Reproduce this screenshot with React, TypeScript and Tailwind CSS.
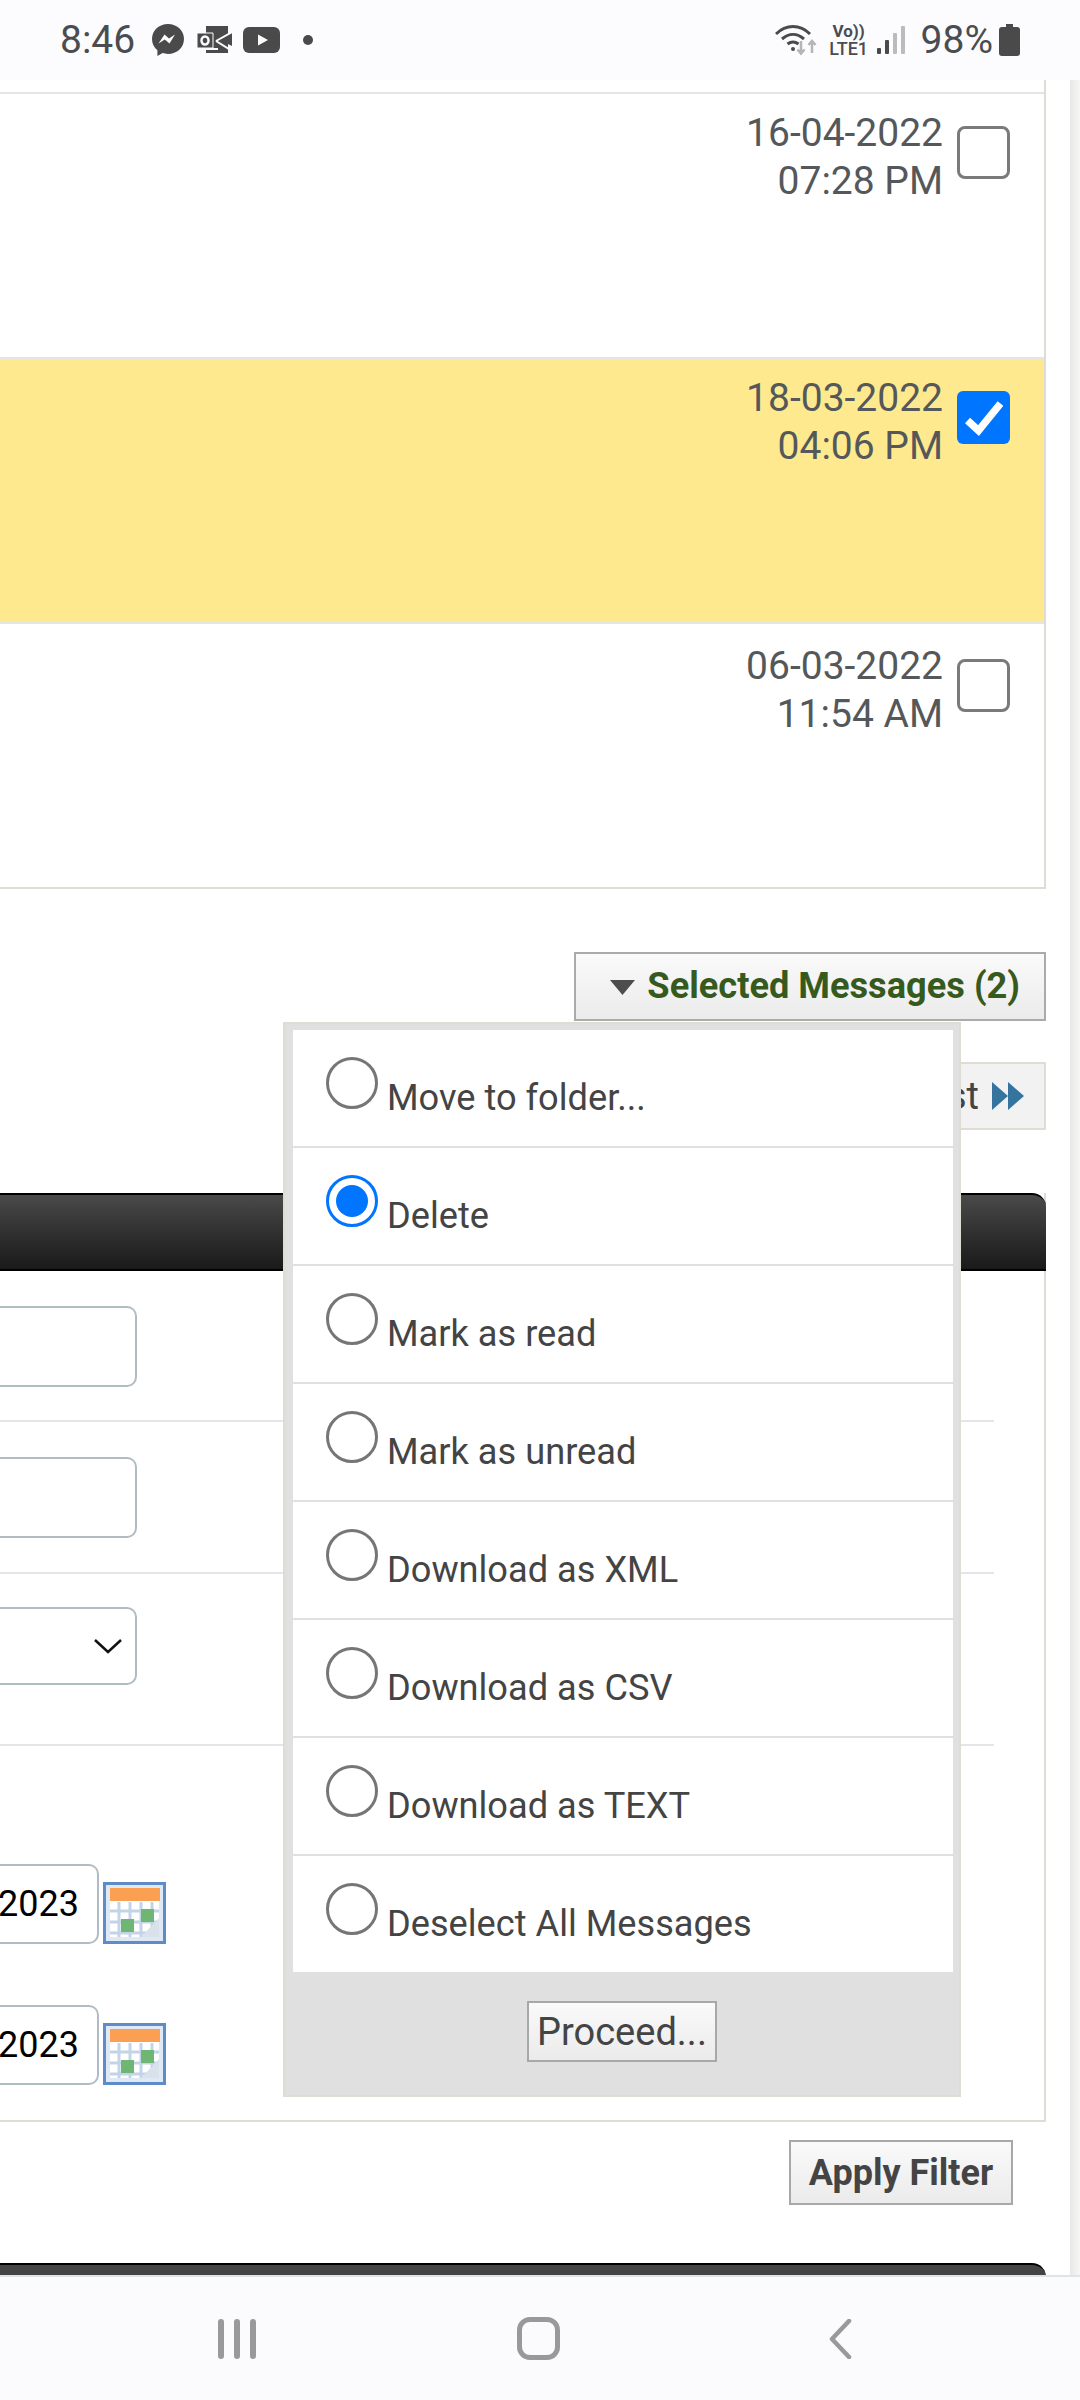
import * as React from "react";

const MENU_ITEMS = [
  { label: "Move to folder...", checked: false },
  { label: "Delete", checked: true },
  { label: "Mark as read", checked: false },
  { label: "Mark as unread", checked: false },
  { label: "Download as XML", checked: false },
  { label: "Download as CSV", checked: false },
  { label: "Download as TEXT", checked: false },
  { label: "Deselect All Messages", checked: false },
];

const MESSAGES = [
  { date: "16-04-2022", time: "07:28 PM", selected: false, pad: "pt-[15px]" },
  { date: "18-03-2022", time: "04:06 PM", selected: true, pad: "pt-[15px]" },
  { date: "06-03-2022", time: "11:54 AM", selected: false, pad: "pt-[18px]" },
];

function StatusBar() {
  return (
    <div className="flex h-[80px] shrink-0 items-center bg-[#fcfcfe] text-[#4a4d50]">
      <span className="ml-[60px] text-[39px] leading-none">8:46</span>
      {/* messenger */}
      <svg className="ml-[17px] h-[32px] w-[32px]" viewBox="0 0 32 32">
        <path d="M16 0C7 0 0 6.600 0 15c0 4.600 2 8.500 5.400 11.200V32l5.200-2.900c1.700.5 3.500.8 5.400.8 9 0 16-6.600 16-15S25 0 16 0z" fill="#4a4a4a" />
        <path d="M6.500 19.500l6-9 4.500 4 6-4-5.500 9-4.700-4z" fill="#fcfcfe" />
      </svg>
      {/* outlook */}
      <svg className="ml-[13px] h-[28px] w-[35px]" viewBox="0 0 35 28">
        <path d="M9 0h22v27H9z" fill="#4a4a4a" />
        <path d="M31 8l4-2v14l-4-2z" fill="#4a4a4a" />
        <path d="M0 7h16v15H0z" fill="#4a4a4a" stroke="#fcfcfe" strokeWidth="1" />
        <ellipse cx="8" cy="14.500" rx="3.500" ry="4" fill="none" stroke="#fcfcfe" strokeWidth="2.500" />
        <path d="M19 15L35 6M19 15l16 10M9 23h12" fill="none" stroke="#fcfcfe" strokeWidth="2" />
      </svg>
      {/* youtube */}
      <svg className="ml-[11px] h-[26px] w-[37px]" viewBox="0 0 37 26">
        <rect width="37" height="26" rx="6" fill="#4a4a4a" />
        <path d="M15 7.500l10 5.500-10 5.500z" fill="#fcfcfe" />
      </svg>
      <span className="ml-[23px] h-[10px] w-[10px] rounded-full bg-[#4a4a4a]" />

      <div className="ml-auto flex items-center">
        {/* wifi */}
        <svg className="h-[32px] w-[42px]" viewBox="0 0 42 32">
          <g fill="none" stroke="#4a4a4a" strokeWidth="3">
            <path d="M1 10C11 0 25 0 35 10" />
            <path d="M7 15c7-6 15-6 22 0" />
            <path d="M12.500 20c4-3 7-3 11 0" />
          </g>
          <circle cx="18" cy="25" r="2" fill="#4a4a4a" />
          <path d="M26 17v12M22.500 25.500l3.500 4 3.500-4M37 29V17M33.500 21l3.500-4 3.500 4" fill="none" stroke="#b5b5b5" strokeWidth="2.500" />
        </svg>
        <div className="ml-[12px] flex w-[40px] flex-col items-center text-[#4a4d50]">
          <span className="text-[17px] font-bold leading-[17px]">Vo))</span>
          <span className="text-[18px] font-medium leading-[18px]">LTE1</span>
        </div>
        <div className="ml-[8px] flex h-[28px] items-end gap-[4px]">
          <span className="h-[6px] w-[4px] rounded-[1px] bg-[#4a4a4a]" />
          <span className="h-[14px] w-[4px] rounded-[1px] bg-[#4a4a4a]" />
          <span className="h-[21px] w-[4px] rounded-[1px] bg-[#bbbbbb]" />
          <span className="h-[28px] w-[4px] rounded-[1px] bg-[#bbbbbb]" />
        </div>
        <span className="ml-[16px] text-[39px] leading-none">98%</span>
        <svg className="ml-[6px] mr-[60px] h-[32px] w-[21px]" viewBox="0 0 21 32">
          <path d="M7 0h7v3h4a3 3 0 0 1 3 3v23a3 3 0 0 1-3 3H3a3 3 0 0 1-3-3V6a3 3 0 0 1 3-3h4z" fill="#4a4a4a" />
        </svg>
      </div>
    </div>
  );
}

function MessageRow({
  date,
  time,
  selected,
  pad,
}: {
  date: string;
  time: string;
  selected: boolean;
  pad: string;
}) {
  return (
    <div
      className={`flex h-[265px] justify-end border-t-2 border-[#e3e6e8] pr-[34px] ${pad} ${
        selected ? "bg-[#fee98f]" : "bg-white"
      }`}
    >
      <div className="text-right text-[39px] leading-[48px] text-[#54585b]">
        <div>{date}</div>
        <div>{time}</div>
      </div>
      {selected ? (
        <div className="ml-[14px] mt-[17px] flex h-[53px] w-[53px] items-center justify-center rounded-[6px] bg-[#0075ff]">
          <svg className="h-[36px] w-[38px]" viewBox="0 0 38 36">
            <path d="M2.500 20.500l11 10 22-27" fill="none" stroke="#fff" strokeWidth="7.500" />
          </svg>
        </div>
      ) : (
        <div className="ml-[14px] mt-[17px] h-[53px] w-[53px] rounded-[8px] border-[3px] border-[#7a7a7a] bg-white" />
      )}
    </div>
  );
}

function TextBox({ width, children }: { width: string; children?: React.ReactNode }) {
  return (
    <div
      className={`flex items-center justify-end rounded-r-[10px] border-2 border-l-0 border-[#b0bcc4] bg-white ${width}`}
    >
      {children}
    </div>
  );
}

function CalendarIcon() {
  return (
    <svg className="ml-[4px] h-[62px] w-[63px] self-end blur-[0.5px]" viewBox="0 0 63 62">
      <rect x="1.500" y="1.500" width="60" height="59" fill="#dfe9f6" stroke="#5f8cc6" strokeWidth="3" />
      <rect x="7" y="7" width="49" height="48" fill="#ffffff" />
      <g stroke="#c3d4e8" strokeWidth="3">
        <path d="M7 29h49M7 40h49M7 51h49M16 20v35M27 20v35M38 20v35M49 20v35" />
      </g>
      <rect x="7" y="6" width="50" height="13" fill="#fb9f52" />
      <path d="M56 36v19H38z" fill="#d9e1ea" />
      <rect x="18" y="37" width="13" height="13" fill="#6fb573" />
      <rect x="38" y="27" width="13" height="13" fill="#6fb573" />
    </svg>
  );
}

function ActionsPopup() {
  return (
    <div className="absolute left-[283px] top-[1022px] h-[1075px] w-[678px] border-2 border-[#dedcd5] bg-[#e0e0e0] pb-0 pl-[8px] pr-[6px] pt-[6px]">
      <div className="bg-white">
        {MENU_ITEMS.map((item, i) => (
          <div
            key={item.label}
            className={`flex pl-[33px] pt-[27px] ${
              i < MENU_ITEMS.length - 1 ? "h-[118px] border-b-2 border-[#e0e0e0]" : "h-[116px]"
            }`}
          >
            {item.checked ? (
              <div className="flex h-[52px] w-[52px] items-center justify-center rounded-full border-[3px] border-[#0075ff]">
                <span className="h-[32px] w-[32px] rounded-full bg-[#0075ff]" />
              </div>
            ) : (
              <div className="h-[52px] w-[52px] rounded-full border-[3px] border-[#767676]" />
            )}
            <span className="ml-[9px] mt-[20px] text-[36.200px] leading-[42px] text-[#444444]">
              {item.label}
            </span>
          </div>
        ))}
      </div>
      <div className="mt-[29px] flex justify-center">
        <button
          type="button"
          className="-ml-[2px] h-[61px] w-[190px] border-2 border-[#a8a8a8] bg-gradient-to-b from-[#fafafa] to-[#ebebeb] text-[38px] leading-none text-[#444444]"
        >
          Proceed...
        </button>
      </div>
    </div>
  );
}

export default function App() {
  return (
    <div className="relative flex h-[2400px] w-[1080px] flex-col overflow-hidden bg-white font-['Roboto',sans-serif]">
      <StatusBar />

      <div className="flex min-h-0 flex-1 overflow-hidden">
        <div className="w-[1046px] shrink-0">
          {/* Message list */}
          <div className="border-b-2 border-r-2 border-[#dedcd5] pt-[12px]">
            {MESSAGES.map((m) => (
              <MessageRow key={m.date} {...m} />
            ))}
          </div>

          {/* Bulk action button */}
          <div className="mt-[63px] flex justify-end">
            <div className="flex h-[69px] w-[472px] items-center justify-end border-2 border-[#aaaaaa] bg-gradient-to-b from-[#fafafa] to-[#ebebeb] pr-[24px]">
              <svg className="mr-[12px] mt-[2px] h-[15px] w-[25px]" viewBox="0 0 25 15">
                <path d="M0 0h25L12.500 15z" fill="#4d4d4d" />
              </svg>
              <span className="text-[36.200px] font-bold leading-none text-[#365a1e]">
                Selected Messages (2)
              </span>
            </div>
          </div>

          {/* Pager */}
          <div className="mt-[41px] flex justify-end">
            <div className="flex h-[68px] w-[200px] items-center justify-end border-2 border-[#dedcd5] bg-[#f2f2f2] pr-[20px] text-[38px] text-[#444444]">
              <span>Last</span>
              <svg className="ml-[13px] h-[28px] w-[32px]" viewBox="0 0 32 28">
                <path d="M0 0l16 14L0 28zM16 0l16 14-16 14z" fill="#35749f" />
              </svg>
            </div>
          </div>

          {/* Filter panel */}
          <div className="mt-[63px] border-b-2 border-r-2 border-[#dedcd5]">
            <div className="-mr-[2px] h-[78px] rounded-tr-[14px] border-y-2 border-black bg-gradient-to-b from-[#4a4a4a] to-[#1a1a1a]" />
            <div className="mr-[50px] flex h-[151px] flex-col border-b-2 border-[#e3e6e8] pt-[35px]">
              <TextBox width="h-[81px] w-[137px]" />
            </div>
            <div className="mr-[50px] flex h-[152px] flex-col border-b-2 border-[#e3e6e8] pt-[35px]">
              <TextBox width="h-[81px] w-[137px]" />
            </div>
            <div className="mr-[50px] flex h-[172px] flex-col border-b-2 border-[#e3e6e8] pt-[33px]">
              <TextBox width="h-[78px] w-[137px]">
                <svg className="mr-[12px] h-[16px] w-[30px]" viewBox="0 0 30 16">
                  <path d="M2 2l13 12L28 2" fill="none" stroke="#111" strokeWidth="2.500" />
                </svg>
              </TextBox>
            </div>
            <div className="flex flex-col gap-[61px] pb-[35px] pt-[118px]">
              <div className="flex">
                <TextBox width="h-[80px] w-[99px]">
                  <span className="mr-[18px] text-[36px] leading-none text-black">2023</span>
                </TextBox>
                <CalendarIcon />
              </div>
              <div className="flex">
                <TextBox width="h-[80px] w-[99px]">
                  <span className="mr-[18px] text-[36px] leading-none text-black">2023</span>
                </TextBox>
                <CalendarIcon />
              </div>
            </div>
          </div>

          {/* Apply */}
          <div className="mt-[18px] flex justify-end pr-[33px]">
            <button
              type="button"
              className="h-[65px] w-[224px] border-2 border-[#a8a8a8] bg-gradient-to-b from-[#fafafa] to-[#ebebeb] text-[36px] font-bold leading-none text-[#444444]"
            >
              Apply Filter
            </button>
          </div>

          <div className="mt-[58px] h-[40px] rounded-tr-[14px] border-t-2 border-black bg-[#444444]" />
        </div>
        <div className="ml-[24px] w-[10px] bg-gradient-to-r from-[#e8e8e6] to-[#f6f6f6]" />
      </div>

      {/* Android nav bar */}
      <div className="flex h-[125px] shrink-0 items-center border-t-2 border-[#dfe4e8] bg-[#fbfbfd]">
        <div className="ml-[218px] flex gap-[10px]">
          <span className="h-[40px] w-[6px] rounded-full bg-[#999999]" />
          <span className="h-[40px] w-[6px] rounded-full bg-[#999999]" />
          <span className="h-[40px] w-[6px] rounded-full bg-[#999999]" />
        </div>
        <div className="ml-[261px] h-[43px] w-[43px] rounded-[13px] border-[5px] border-[#999999]" />
        <svg className="ml-[269px] h-[40px] w-[23px]" viewBox="0 0 23 40">
          <path d="M20 2L3 20l17 18" fill="none" stroke="#999999" strokeWidth="4.500" strokeLinecap="round" strokeLinejoin="round" />
        </svg>
      </div>

      <ActionsPopup />
    </div>
  );
}
